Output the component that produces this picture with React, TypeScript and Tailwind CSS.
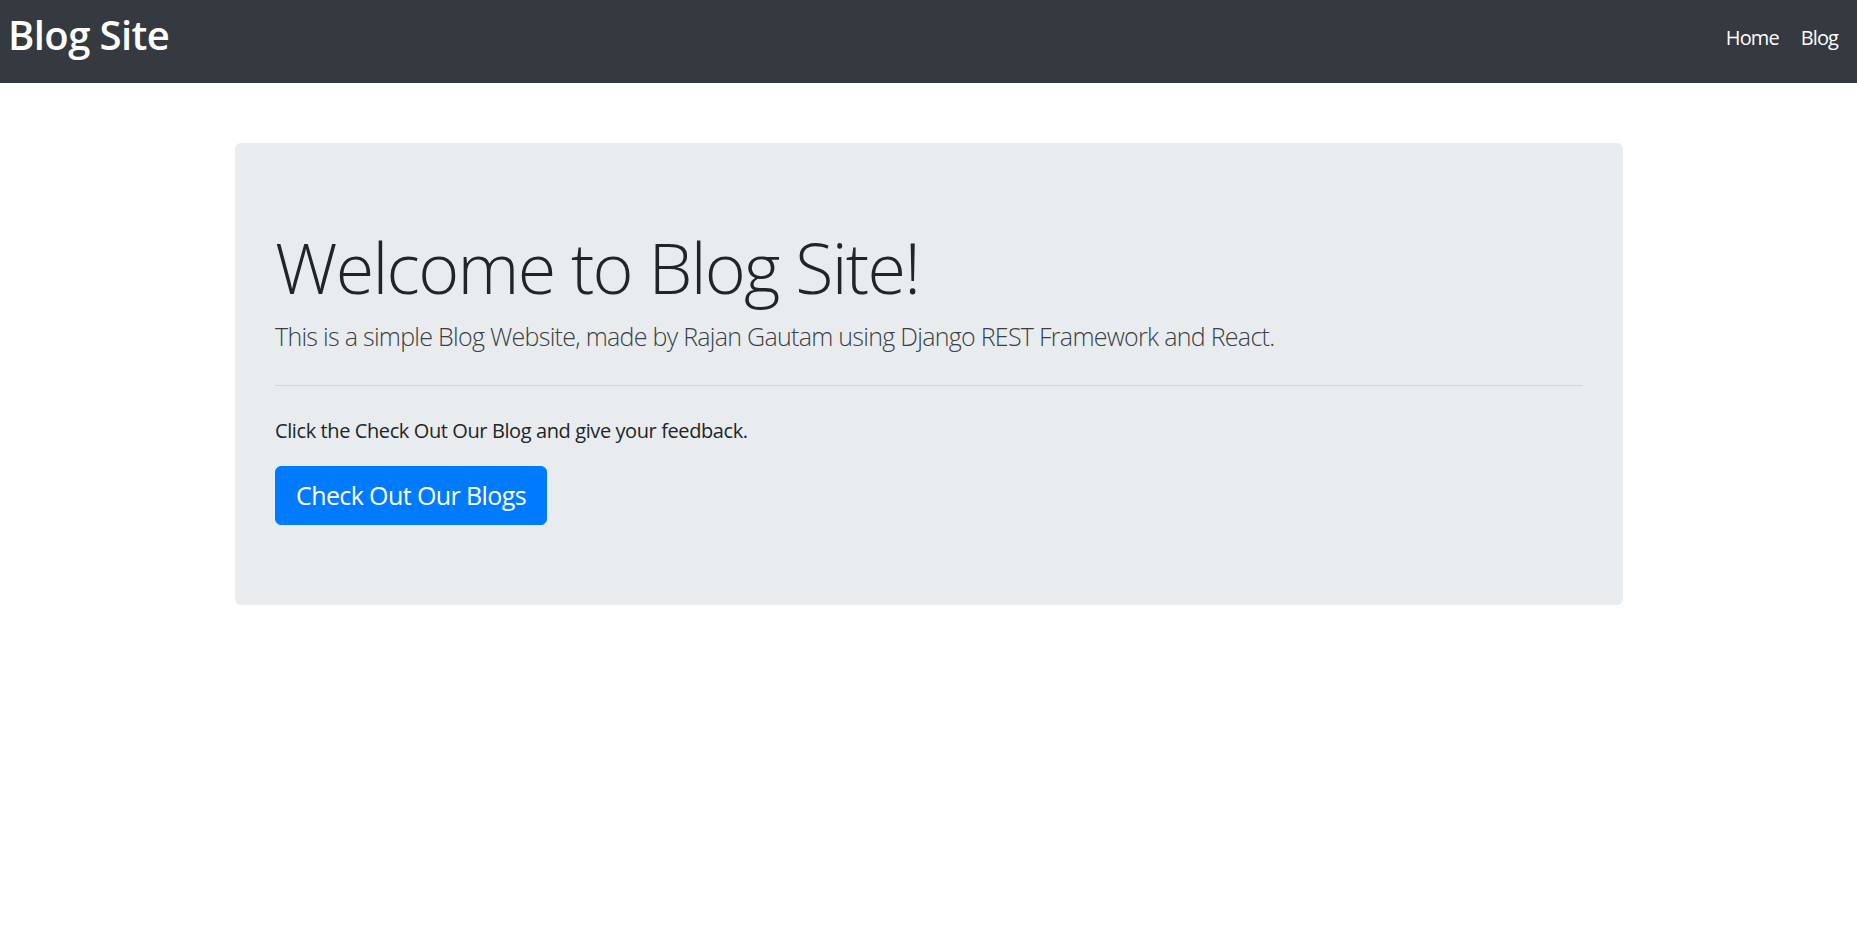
import React from "react";

export default function App() {
  return (
    <div
      className="min-h-screen bg-white text-[#212529]"
      style={{ fontFamily: '"Open Sans", "Noto Sans", "Liberation Sans", sans-serif' }}
    >
      <nav className="flex h-[83px] items-start justify-between bg-[#343a40] pl-[8px] pr-[8px]">
        <a href="#" className="mt-[8px] text-[40px] font-semibold leading-[54px] tracking-[-0.6px] text-white">
          Blog Site
        </a>
        <ul className="mt-[23px] flex items-center">
          <li>
            <a href="#" className="block px-[11px] text-[20px] leading-[30px] tracking-[-0.9px] text-white">
              Home
            </a>
          </li>
          <li>
            <a href="#" className="block px-[11px] text-[20px] leading-[30px] tracking-[-0.9px] text-white">
              Blog
            </a>
          </li>
        </ul>
      </nav>

      <main className="pt-[60px]">
        <div className="ml-[235px] w-[1388px] rounded-[6px] bg-[#e9ecef] px-[40px] pb-[80px] pt-[82px]">
          <h1 className="mb-[9px] text-[70px] font-light leading-[84px] tracking-[-1.7px] text-[#212529]">
            Welcome to Blog Site!
          </h1>
          <p className="text-[25px] font-light leading-[37.5px] tracking-[-0.72px] text-[#3a3f45]">
            This is a simple Blog Website, made by Rajan Gautam using Django REST Framework and React.
          </p>
          <hr className="mb-[30px] mt-[29px] border-0 border-t border-[#d3d6d9]" />
          <p className="mb-[20px] text-[20px] leading-[30px] tracking-[-0.4px] text-[#212529]">
            Click the Check Out Our Blog and give your feedback.
          </p>
          <a
            href="#"
            className="inline-block rounded-[6px] border border-[#007bff] bg-[#007bff] px-[20px] py-[10px] text-[25px] leading-[37.5px] tracking-[-0.6px] text-white"
          >
            Check Out Our Blogs
          </a>
        </div>
      </main>
    </div>
  );
}
